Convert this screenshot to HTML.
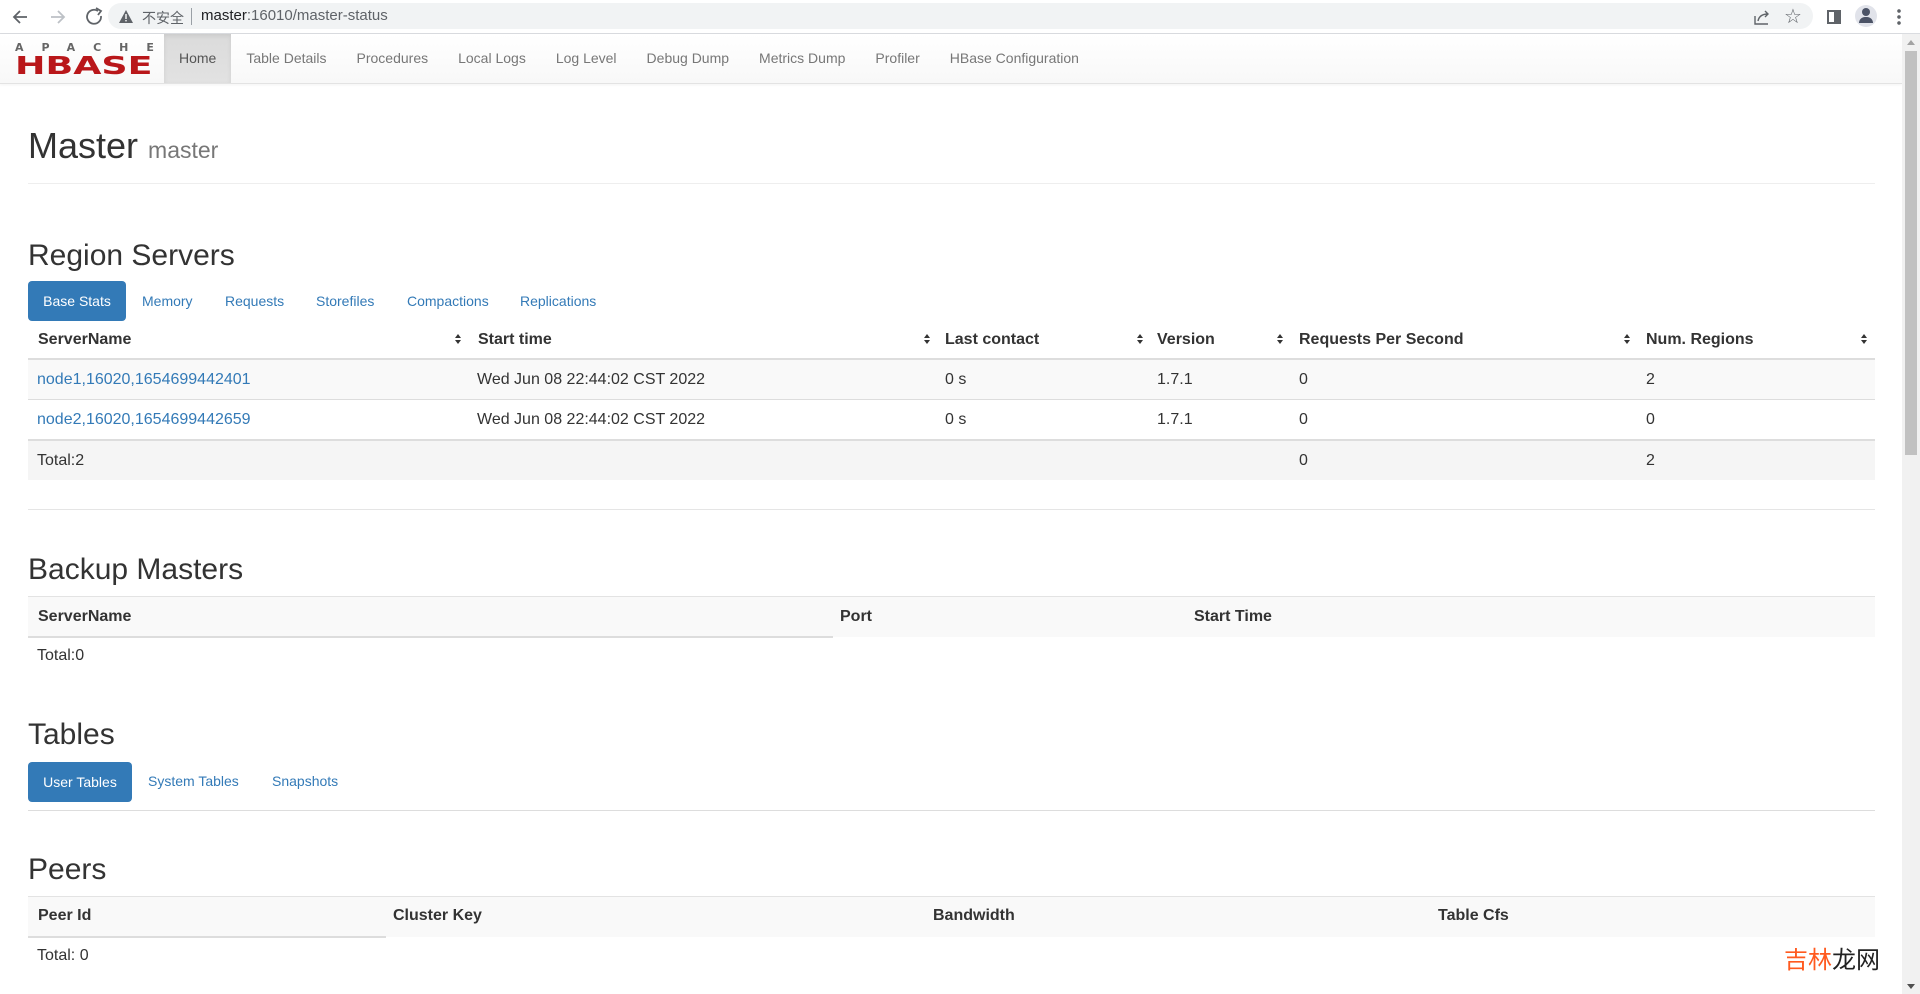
<!DOCTYPE html>
<html><head><meta charset="utf-8">
<style>
*{box-sizing:border-box;margin:0;padding:0}
body{width:1920px;height:994px;overflow:hidden;background:#fff;font-family:"Liberation Sans",Arial,sans-serif;color:#333;position:relative}
.abs{position:absolute}
.chrome{left:0;top:0;width:1920px;height:34px;background:#fff;border-bottom:1px solid #dadce0}
.url{left:108px;top:3px;width:1705px;height:26px;border-radius:13px;background:#f1f3f4}
.navbar{left:0;top:34px;width:1902px;height:50px;background:linear-gradient(#fff,#f8f8f8);border-bottom:1px solid #e3e3e3;box-shadow:0 1px 3px rgba(0,0,0,.05)}
.nav{left:149px;top:34px;height:49px;display:flex;font-size:14px;color:#777}
.nav div{padding:0 15px;line-height:49px;white-space:nowrap}
.nav .act{color:#555;margin-left:15px;background:linear-gradient(#dbdbdb,#e2e2e2);box-shadow:inset 0 2px 5px rgba(0,0,0,.08)}
.h1{left:28px;top:126px;font-size:36px;color:#333;line-height:40px}
.h1 small{font-size:23px;color:#777}
.hr{left:28px;width:1847px;height:1px;background:#eee}
.h2{left:28px;font-size:30px;line-height:34px;color:#333}
.pill{height:40px;line-height:40px;font-size:14px;color:#337ab7;position:absolute}
.pill.on{background:#337ab7;color:#fff;border-radius:4px;text-align:center}
.t{font-size:16px;position:absolute;white-space:nowrap}
.b{font-weight:bold}
.a{color:#337ab7}
.sort{position:absolute;width:6px;height:10px}
.sort:before{content:"";position:absolute;left:0;top:0;border-left:3px solid transparent;border-right:3px solid transparent;border-bottom:4px solid #333}
.sort:after{content:"";position:absolute;left:0;top:6px;border-left:3px solid transparent;border-right:3px solid transparent;border-top:4px solid #333}
.scroll{left:1902px;top:34px;width:18px;height:960px;background:#f1f1f1}
.thumb{left:1905px;top:51px;width:12px;height:404px;background:#c1c1c1}
</style></head><body>

<div class="abs chrome"></div>
<svg class="abs" style="left:10px;top:5px" width="100" height="24" viewBox="0 0 100 24">
<path d="M17 12H5M10 6L4 12L10 18" stroke="#5f6368" stroke-width="1.8" fill="none"/>
<path d="M41 12H53M48 6L54 12L48 18" stroke="#bdc1c6" stroke-width="1.8" fill="none"/>
<path d="M91 11A7 7 0 1 1 88 6" stroke="#5f6368" stroke-width="1.8" fill="none"/>
<path d="M86 3L91 6L88 10" stroke="#5f6368" stroke-width="1.8" fill="none"/>
</svg>
<div class="abs url"></div>
<svg class="abs" style="left:119px;top:10px" width="14" height="13"><path d="M7 0L14 13H0Z" fill="#5f6368"/><rect x="6.3" y="4" width="1.4" height="5" fill="#fff"/><rect x="6.3" y="10" width="1.4" height="1.4" fill="#fff"/></svg>
<div class="abs" style="left:142px;top:8px;font-size:14px;color:#5f6368;font-family:'Liberation Sans','Noto Sans CJK SC',sans-serif">不安全</div>
<div class="abs" style="left:191px;top:8px;width:1px;height:17px;background:#9aa0a6"></div>
<div class="abs" style="left:201px;top:7px;font-size:15px;color:#202124">master<span style="color:#5f6368">:16010/master-status</span></div>
<svg class="abs" style="left:1752px;top:7px" width="20" height="20"><path d="M3 9v8h13" stroke="#5f6368" stroke-width="1.4" fill="none"/><path d="M6 14c1-5 5-7 10-7M13 4l3 3-3 3" stroke="#5f6368" stroke-width="1.4" fill="none"/></svg>
<div class="abs" style="left:1784px;top:4px;font-size:20px;color:#5f6368">☆</div>
<div class="abs" style="left:1827px;top:10px;width:14px;height:14px;border:2px solid #5f6368;border-right-width:7px"></div>
<div class="abs" style="left:1855px;top:5px;width:22px;height:22px;border-radius:50%;background:#e1e3ea"></div>
<div class="abs" style="left:1862px;top:8px;width:8px;height:8px;border-radius:50%;background:#4b5366"></div>
<div class="abs" style="left:1859px;top:17px;width:14px;height:6px;border-radius:6px 6px 0 0;background:#4b5366"></div>
<div class="abs" style="left:1897px;top:8px;width:4px;height:18px;background:radial-gradient(circle,#5f6368 1.6px,transparent 2px) 0 0/4px 6px"></div>

<div class="abs navbar"></div>
<div class="abs" style="left:15px;top:42px;font-size:11px;font-weight:bold;letter-spacing:18px;color:#666;line-height:12px;font-family:'DejaVu Sans',sans-serif">APACHE</div>
<div class="abs" style="left:15px;top:54px;font-size:28px;font-weight:900;color:#b9171a;line-height:26px;transform:scale(1.3,0.9);transform-origin:left top;font-family:'DejaVu Sans','Liberation Sans',sans-serif">HBASE</div>
<div class="abs nav">
<div class="act">Home</div><div>Table Details</div><div>Procedures</div><div>Local Logs</div><div>Log Level</div><div>Debug Dump</div><div>Metrics Dump</div><div>Profiler</div><div>HBase Configuration</div>
</div>

<div class="abs h1">Master <small>master</small></div>
<div class="abs hr" style="top:183px"></div>

<div class="abs h2" style="top:239px">Region Servers</div>
<div class="pill on" style="left:28px;top:281px;width:98px">Base Stats</div>
<div class="pill" style="left:142px;top:281px">Memory</div>
<div class="pill" style="left:225px;top:281px">Requests</div>
<div class="pill" style="left:316px;top:281px">Storefiles</div>
<div class="pill" style="left:407px;top:281px">Compactions</div>
<div class="pill" style="left:520px;top:281px">Replications</div>

<div class="abs" style="left:28px;top:358px;width:1847px;height:2px;background:#ddd"></div>
<div class="abs" style="left:28px;top:360px;width:1847px;height:39px;background:#f9f9f9"></div>
<div class="abs" style="left:28px;top:399px;width:1847px;height:1px;background:#ddd"></div>
<div class="abs" style="left:28px;top:439px;width:1847px;height:2px;background:#ddd"></div>
<div class="abs" style="left:28px;top:441px;width:1847px;height:39px;background:#f5f5f5"></div>

<div class="t b" style="left:38px;top:331px">ServerName</div><div class="sort" style="left:455px;top:334px"></div>
<div class="t b" style="left:478px;top:331px">Start time</div><div class="sort" style="left:924px;top:334px"></div>
<div class="t b" style="left:945px;top:331px">Last contact</div><div class="sort" style="left:1137px;top:334px"></div>
<div class="t b" style="left:1157px;top:331px">Version</div><div class="sort" style="left:1277px;top:334px"></div>
<div class="t b" style="left:1299px;top:331px">Requests Per Second</div><div class="sort" style="left:1624px;top:334px"></div>
<div class="t b" style="left:1646px;top:331px">Num. Regions</div><div class="sort" style="left:1861px;top:334px"></div>

<div class="t a" style="left:37px;top:371px">node1,16020,1654699442401</div>
<div class="t" style="left:477px;top:371px">Wed Jun 08 22:44:02 CST 2022</div>
<div class="t" style="left:945px;top:371px">0 s</div>
<div class="t" style="left:1157px;top:371px">1.7.1</div>
<div class="t" style="left:1299px;top:371px">0</div>
<div class="t" style="left:1646px;top:371px">2</div>

<div class="t a" style="left:37px;top:411px">node2,16020,1654699442659</div>
<div class="t" style="left:477px;top:411px">Wed Jun 08 22:44:02 CST 2022</div>
<div class="t" style="left:945px;top:411px">0 s</div>
<div class="t" style="left:1157px;top:411px">1.7.1</div>
<div class="t" style="left:1299px;top:411px">0</div>
<div class="t" style="left:1646px;top:411px">0</div>

<div class="t" style="left:37px;top:452px">Total:2</div>
<div class="t" style="left:1299px;top:452px">0</div>
<div class="t" style="left:1646px;top:452px">2</div>

<div class="abs hr" style="top:509px;background:#e5e5e5"></div>

<div class="abs h2" style="top:553px">Backup Masters</div>
<div class="abs" style="left:28px;top:596px;width:1847px;height:41px;background:#f9f9f9;border-top:1px solid #e3e3e3"></div>
<div class="abs" style="left:28px;top:636px;width:805px;height:2px;background:#ddd"></div>
<div class="t b" style="left:38px;top:608px">ServerName</div>
<div class="t b" style="left:840px;top:608px">Port</div>
<div class="t b" style="left:1194px;top:608px">Start Time</div>
<div class="t" style="left:37px;top:647px">Total:0</div>

<div class="abs h2" style="top:718px">Tables</div>
<div class="pill on" style="left:28px;top:762px;width:104px">User Tables</div>
<div class="pill" style="left:148px;top:761px">System Tables</div>
<div class="pill" style="left:272px;top:761px">Snapshots</div>
<div class="abs hr" style="top:810px;background:#ddd"></div>

<div class="abs h2" style="top:853px">Peers</div>
<div class="abs" style="left:28px;top:896px;width:1847px;height:41px;background:#f9f9f9;border-top:1px solid #e3e3e3"></div>
<div class="abs" style="left:28px;top:936px;width:358px;height:2px;background:#ddd"></div>
<div class="t b" style="left:38px;top:907px">Peer Id</div>
<div class="t b" style="left:393px;top:907px">Cluster Key</div>
<div class="t b" style="left:933px;top:907px">Bandwidth</div>
<div class="t b" style="left:1438px;top:907px">Table Cfs</div>
<div class="t" style="left:37px;top:947px">Total: 0</div>

<div class="abs" style="left:1784px;top:944px;font-size:24px;line-height:28px;font-family:'Noto Sans CJK SC',sans-serif"><span style="color:#ff5a1f">吉林</span><span style="color:#222">龙网</span></div>

<div class="abs scroll"></div>
<div class="abs thumb"></div>
<div class="abs" style="left:1907px;top:40px;border-left:4px solid transparent;border-right:4px solid transparent;border-bottom:5px solid #a3a3a3"></div>
<div class="abs" style="left:1907px;top:984px;border-left:4px solid transparent;border-right:4px solid transparent;border-top:5px solid #505050"></div>
</body></html>
